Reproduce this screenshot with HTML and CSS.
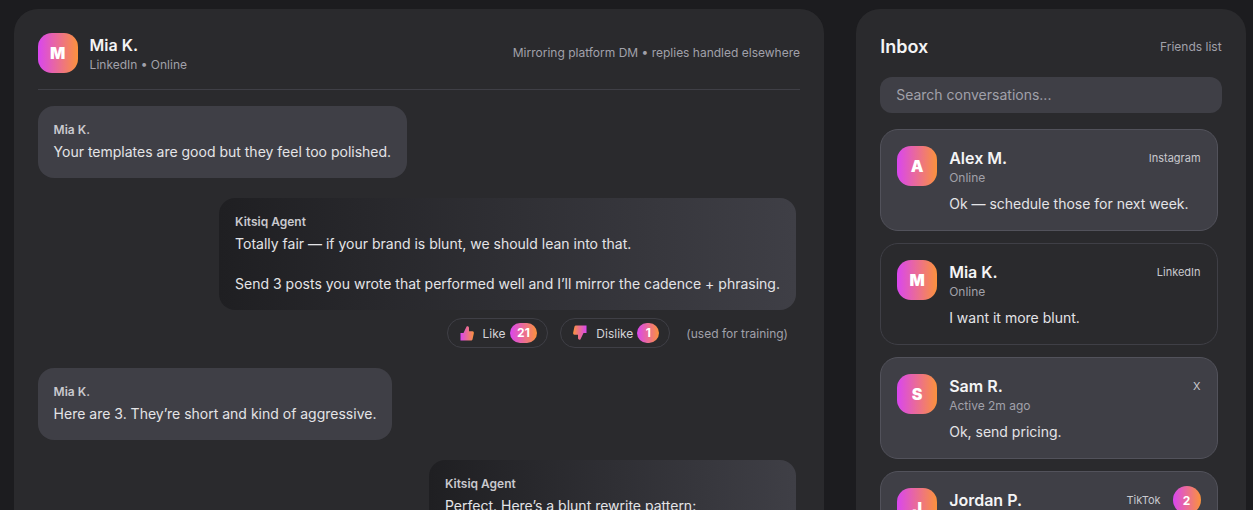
FILE: index.html
```html
<!DOCTYPE html>
<html lang="en">
<head>
    <meta charset="UTF-8">
    <meta name="viewport" content="width=device-width, initial-scale=1.0">
    <title>Kitsiq Inbox</title>
    <link rel="stylesheet" href="styles.css">
</head>
<body>
    <svg class="defs" width="0" height="0" aria-hidden="true">
        <defs>
            <linearGradient id="brand" x1="0" y1="0" x2="1" y2="0">
                <stop offset="0" stop-color="#d946ef"/>
                <stop offset="1" stop-color="#fb923c"/>
            </linearGradient>
        </defs>
    </svg>
    <div class="app">
        <main class="panel chat">
            <header class="chat-header">
                <div class="avatar">M</div>
                <div class="chat-who">
                    <div class="chat-name">Mia K.</div>
                    <div class="muted">LinkedIn • Online</div>
                </div>
                <div class="muted chat-note">Mirroring platform DM • replies handled elsewhere</div>
            </header>

            <div class="messages">
                <div class="bubble">
                    <div class="sender">Mia K.</div>
                    <p>Your templates are good but they feel too polished.</p>
                </div>

                <div class="bubble agent">
                    <div class="sender">Kitsiq Agent</div>
                    <p>Totally fair — if your brand is blunt, we should lean into that.</p>
                    <p class="spaced">Send 3 posts you wrote that performed well and I’ll mirror the cadence + phrasing.</p>
                </div>
                <div class="feedback">
                    <button class="vote">
                        <svg class="thumb" viewBox="0 0 16 16"><path fill="url(#brand)" d="M1.500 8H4.500L7.600 1.600C8.600.9 10 1.600 10 3V6.200H13.400C14.800 6.200 15 7.400 14.800 8.400L13.600 14C13.400 15 12.800 15.500 11.800 15.500H1.500Z"/></svg>
                        Like <span class="count">21</span>
                    </button>
                    <button class="vote">
                        <svg class="thumb" viewBox="0 0 16 16"><path fill="url(#brand)" transform="rotate(180 8 8)" d="M1.500 8H4.500L7.600 1.600C8.600.9 10 1.600 10 3V6.200H13.400C14.800 6.200 15 7.400 14.800 8.400L13.600 14C13.400 15 12.800 15.500 11.800 15.500H1.500Z"/></svg>
                        Dislike <span class="count">1</span>
                    </button>
                    <span class="training">(used for training)</span>
                </div>

                <div class="bubble">
                    <div class="sender">Mia K.</div>
                    <p>Here are 3. They’re short and kind of aggressive.</p>
                </div>

                <div class="bubble agent wide">
                    <div class="sender">Kitsiq Agent</div>
                    <p>Perfect. Here’s a blunt rewrite pattern:</p>
                </div>
            </div>
        </main>

        <aside class="panel inbox">
            <div class="inbox-head">
                <h2>Inbox</h2>
                <span class="muted">Friends list</span>
            </div>
            <input class="search" type="text" placeholder="Search conversations...">

            <div class="threads">
                <div class="thread active">
                    <div class="avatar">A</div>
                    <div class="thread-body">
                        <div class="thread-top">
                            <span class="thread-name">Alex M.</span>
                            <span class="platform">Instagram</span>
                        </div>
                        <div class="muted">Online</div>
                        <div class="thread-msg">Ok — schedule those for next week.</div>
                    </div>
                </div>
                <div class="thread">
                    <div class="avatar">M</div>
                    <div class="thread-body">
                        <div class="thread-top">
                            <span class="thread-name">Mia K.</span>
                            <span class="platform">LinkedIn</span>
                        </div>
                        <div class="muted">Online</div>
                        <div class="thread-msg">I want it more blunt.</div>
                    </div>
                </div>
                <div class="thread active">
                    <div class="avatar">S</div>
                    <div class="thread-body">
                        <div class="thread-top">
                            <span class="thread-name">Sam R.</span>
                            <span class="platform">X</span>
                        </div>
                        <div class="muted">Active 2m ago</div>
                        <div class="thread-msg">Ok, send pricing.</div>
                    </div>
                </div>
                <div class="thread active">
                    <div class="avatar">J</div>
                    <div class="thread-body">
                        <div class="thread-top">
                            <span class="thread-name">Jordan P.</span>
                            <span class="platform">TikTok</span>
                            <span class="unread">2</span>
                        </div>
                        <div class="muted">Active 5m ago</div>
                        <div class="thread-msg">Can you send examples?</div>
                    </div>
                </div>
            </div>
        </aside>
    </div>
</body>
</html>
```

FILE: styles.css
```css
* {
    box-sizing: border-box;
}
html, body {
    height: 100%;
    margin: 0;
    overflow: hidden;
}
body {
    font-family: 'Inter', 'Liberation Sans', sans-serif;
    background-color: #1c1c1f;
    color: #f4f4f5;
}
.defs {
    position: absolute;
}
.app {
    display: grid;
    grid-template-columns: 810.4px 389.4px;
    gap: 32.2px;
    padding: 9px 7px 0 13.6px;
    height: 100%;
}
.panel {
    background-color: #2a2a2d;
    backdrop-filter: blur(12px);
    border-radius: 24px;
    padding: 24px;
    height: 640px;
}
.avatar {
    flex: none;
    width: 40px;
    height: 40px;
    border-radius: 14px;
    background: linear-gradient(90deg, #d946ef, #fb923c);
    color: white;
    font-weight: 900;
    font-size: 16px;
    display: flex;
    align-items: center;
    justify-content: center;
}
.muted {
    font-size: 12px;
    line-height: 16px;
    color: #a1a1aa;
}
.chat-header {
    display: flex;
    align-items: center;
    gap: 12px;
    padding-bottom: 16px;
    border-bottom: 1px solid #3f3f46;
}
.chat-name {
    font-size: 16px;
    line-height: 24px;
    font-weight: 600;
}
.chat-note {
    margin-left: auto;
}
.messages {
    display: flex;
    flex-direction: column;
    align-items: flex-start;
    padding: 16px 4px 0 0;
}
.bubble {
    background-color: #3f3f46;
    border-radius: 16px;
    padding: 16px;
    margin-bottom: 20px;
    font-size: 14px;
    line-height: 20px;
}
.bubble p {
    margin: 0;
    color: #e4e4e7;
}
.bubble .spaced {
    margin-top: 20px;
}
.sender {
    font-size: 12px;
    line-height: 16px;
    font-weight: 600;
    color: #c9c9ce;
    margin-bottom: 4px;
}
.agent {
    align-self: flex-end;
    background: linear-gradient(90deg, #1f1f22, #3f3f46);
}
.wide {
    min-width: 367px;
}
.bubble.agent:has(+ .feedback) {
    margin-bottom: 8px;
}
.feedback {
    align-self: flex-end;
    display: flex;
    align-items: center;
    gap: 12px;
    padding-right: 8px;
    margin-bottom: 20px;
}
.vote {
    display: flex;
    align-items: center;
    gap: 4px;
    height: 30px;
    padding: 0 10px 0 11px;
    background: none;
    border: 1px solid #3f3f46;
    border-radius: 15px;
    color: #d4d4d8;
    font-family: inherit;
    font-size: 12px;
}
.thumb {
    width: 16px;
    height: 16px;
    margin-right: 4px;
}
.count {
    min-width: 22px;
    height: 20px;
    padding: 0 7.5px;
    border-radius: 10px;
    background: linear-gradient(90deg, #d946ef, #fb923c);
    color: white;
    font-weight: 700;
    line-height: 20px;
    text-align: center;
}
.training {
    font-size: 12px;
    color: #a1a1aa;
    margin-left: 4px;
}
.inbox-head {
    display: flex;
    align-items: center;
    justify-content: space-between;
    height: 28px;
}
.inbox-head h2 {
    margin: 0;
    font-size: 18px;
    line-height: 26px;
    font-weight: 600;
}
.search {
    display: block;
    width: 100%;
    height: 36px;
    margin-top: 16px;
    padding: 0 16px 2px;
    border: none;
    border-radius: 12px;
    background-color: #3f3f46;
    color: white;
    font-family: inherit;
    font-size: 14px;
}
.search::placeholder {
    color: #a1a1aa;
    opacity: 1;
}
.threads {
    display: flex;
    flex-direction: column;
    gap: 12px;
    margin-top: 16px;
    padding-right: 4px;
}
.thread {
    display: flex;
    gap: 12px;
    height: 102px;
    flex: none;
    padding: 16px;
    border: 1px solid #3f3f46;
    border-radius: 18px;
}
.thread.active {
    background-color: #3f3f46;
    border-color: #52525b;
}
.thread-body {
    flex: 1;
    min-width: 0;
}
.thread-top {
    display: flex;
    align-items: center;
    gap: 12px;
    height: 24px;
}
.thread-name {
    font-size: 16px;
    font-weight: 600;
    margin-right: auto;
}
.platform {
    font-size: 11px;
    color: #c9c9ce;
}
.unread {
    width: 28px;
    height: 28px;
    border-radius: 50%;
    background: linear-gradient(90deg, #d946ef, #fb923c);
    color: white;
    font-size: 12px;
    font-weight: 700;
    display: flex;
    align-items: center;
    justify-content: center;
}
.thread-msg {
    margin-top: 8px;
    font-size: 14px;
    line-height: 20px;
    color: #e4e4e7;
}
```
